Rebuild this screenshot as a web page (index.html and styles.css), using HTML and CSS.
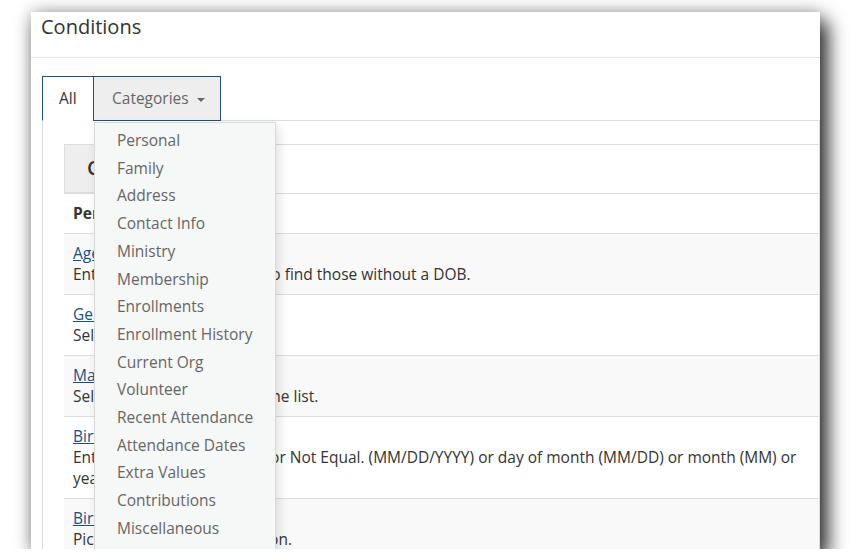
FILE: index.html
```html
<!DOCTYPE html>
<html lang="en">
<head>
  <meta charset="UTF-8">
  <meta name="viewport" content="width=device-width, initial-scale=1">
  <title>Conditions</title>
  <link rel="stylesheet" href="styles.css">
</head>
<body>

<div class="shot">
  <div class="page-head">
    <h1>Conditions</h1>
  </div>

  <ul class="nav-tabs">
    <li class="tab active">All</li>
    <li class="tab open">Categories <span class="caret"></span></li>
  </ul>

  <div class="tab-content">
    <div class="search-row">
      <div class="search-box">Common</div>
    </div>
    <table class="conditions">
      <tr class="group"><th>Personal</th></tr>
      <tr class="striped"><td><a href="#">Age</a><br>Enter the age. Use Equal 0 to find those without a DOB.</td></tr>
      <tr><td><a href="#">Gender</a><br>Select one or more.</td></tr>
      <tr class="striped"><td><a href="#">Marital Status</a><br>Select one or several from the list.</td></tr>
      <tr><td><a href="#">Birthday</a><br>Enter a date and use Equal or Not Equal. (MM/DD/YYYY) or day of month (MM/DD) or month (MM) or year (YYYY).</td></tr>
      <tr class="striped"><td><a href="#">Birth Year</a><br>Pick dates for the comparison.</td></tr>
    </table>
  </div>

  <!-- Categories dropdown (open) -->
  <ul class="dropdown-menu">
    <li>Personal</li>
    <li>Family</li>
    <li>Address</li>
    <li>Contact Info</li>
    <li>Ministry</li>
    <li>Membership</li>
    <li>Enrollments</li>
    <li>Enrollment History</li>
    <li>Current Org</li>
    <li>Volunteer</li>
    <li>Recent Attendance</li>
    <li>Attendance Dates</li>
    <li>Extra Values</li>
    <li>Contributions</li>
    <li>Miscellaneous</li>
    <li>Administration</li>
  </ul>
</div>

</body>
</html>
```

FILE: styles.css
```css
body {
  margin: 0;
  background: #fff;
  font-family: 'Open Sans', sans-serif;
  font-size: 15.5px;
  color: #333;
}

.shot {
  position: relative;
  width: 789px;
  height: 537px;
  margin: 12px 0 0 31px;
  background: #fff;
  overflow: hidden;
  box-shadow: 8px 10px 18px rgba(0,0,0,0.78), 0 0 16px rgba(0,0,0,0.3);
}

.page-head {
  height: 46px;
  padding: 1px 10px 0;
  box-sizing: border-box;
  border-bottom: 1px solid #e3e3e3;
}

.page-head h1 {
  margin: 0;
  font-size: 20px;
  font-weight: 400;
  line-height: 28px;
  color: #333;
}

.nav-tabs {
  display: flex;
  list-style: none;
  margin: 18px 0 0 11px;
  padding: 0;
  border-bottom: 1px solid #ddd;
}

.tab {
  box-sizing: border-box;
  height: 45px;
  margin-bottom: -1px;
  line-height: 43px;
  border: 1px solid #1f4f7d;
}

.tab.active {
  width: 51px;
  padding-left: 16px;
  border-right: 0;
  border-bottom-color: #fff;
  background: #fff;
  color: #333;
}

.tab.open {
  width: 128px;
  padding-left: 18px;
  background: #eee;
  color: #666;
}

.caret {
  display: inline-block;
  margin-left: 4px;
  vertical-align: middle;
  border-top: 4px solid #666;
  border-left: 4px solid transparent;
  border-right: 4px solid transparent;
}

.tab-content {
  height: 421px;
  margin-left: 11px;
  padding: 23px 0 0 21px;
  border-left: 1px solid #ddd;
  border-right: 1px solid #ddd;
  border-bottom: 1px solid #ddd;
  overflow: hidden;
}

.search-row {
  height: 48px;
  border-top: 1px solid #ddd;
}

.search-box {
  width: 180px;
  height: 48px;
  box-sizing: border-box;
  padding-left: 22px;
  line-height: 46px;
  background: #eee;
  border: 1px solid #ddd;
  border-top: 0;
  font-size: 20px;
  font-weight: 600;
}

.conditions {
  width: 100%;
  border-collapse: collapse;
}

.conditions th,
.conditions td {
  padding: 9px 9px;
  line-height: 21px;
  text-align: left;
  border-top: 1px solid #ddd;
}

.conditions th {
  font-weight: 700;
}

.conditions tr.striped {
  background: #f9f9f9;
}

.conditions a {
  color: #15528d;
}

.dropdown-menu {
  position: absolute;
  left: 63px;
  top: 110px;
  width: 182px;
  box-sizing: border-box;
  margin: 0;
  padding: 4px 0 0;
  list-style: none;
  background: #f6f7f7;
  border: 1px solid rgba(0,0,0,0.12);
  box-shadow: 3px 4px 10px rgba(0,0,0,0.12);
}

.dropdown-menu li {
  padding-left: 22px;
  line-height: 27.7px;
  color: #666;
  white-space: nowrap;
}
```
